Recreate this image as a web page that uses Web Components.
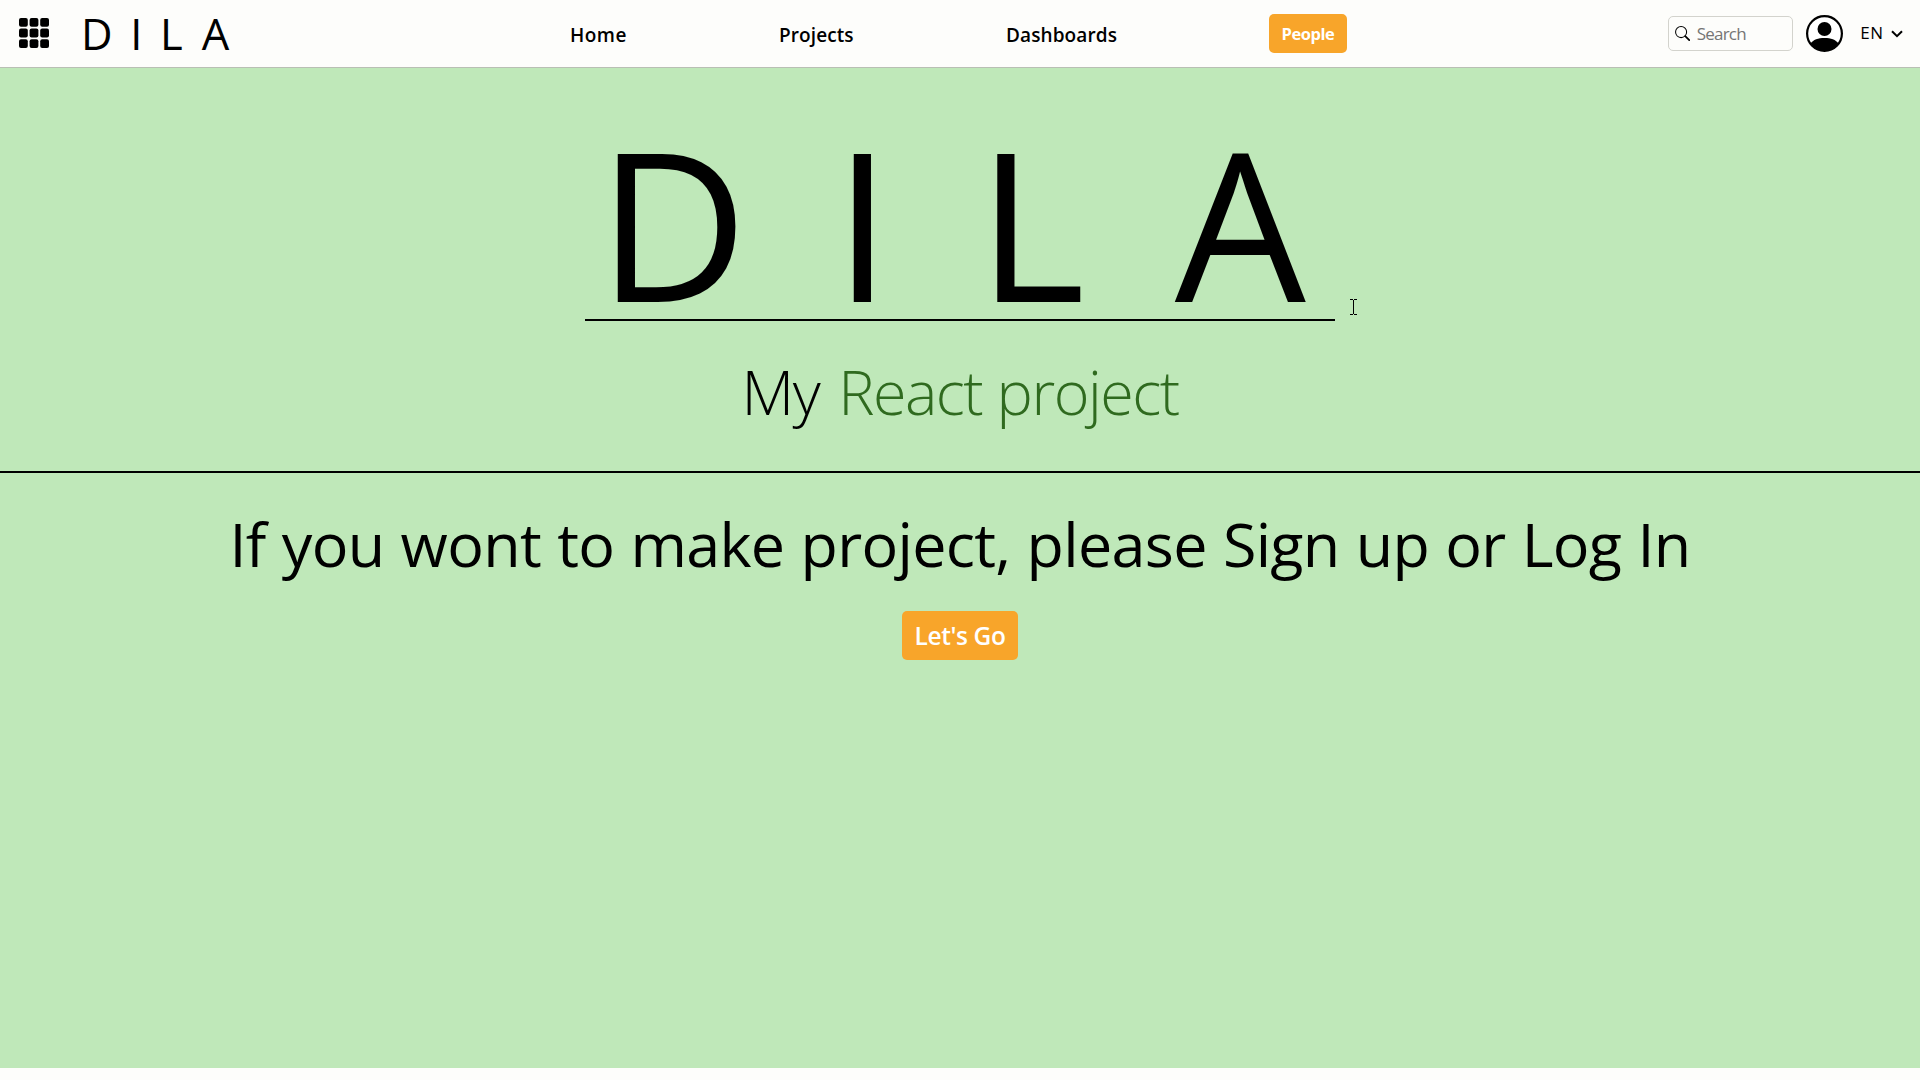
<!DOCTYPE html>
<html lang="en">
<head>
<meta charset="utf-8">
<title>DILA</title>
<style>
html,body{margin:0;height:100%;background:#fdfdfb;overflow:hidden}
body{font-family:"Open Sans","Noto Sans",sans-serif;color:#000}
</style>
</head>
<body>
<dila-app></dila-app>
<script>
const define=(name,html)=>customElements.define(name,class extends HTMLElement{
  constructor(){super();this.attachShadow({mode:'open'}).innerHTML=html;}
});

define('dila-logo',`<style>
:host{display:flex;font-size:43.5px;line-height:60px;white-space:pre}
span{letter-spacing:17.6px}.l{letter-spacing:19px}.a{letter-spacing:0}
</style><span>DI</span><span class="l">L</span><span class="a">A</span>`);

define('dila-apps',`<style>:host{display:block;width:30px;height:30px}svg{display:block}</style>
<svg width="30" height="30" viewBox="0 0 30 30">
${[0,10.6,21.2].map(y=>[0,10.6,21.2].map(x=>`<rect x="${x}" y="${y}" width="8.8" height="8.8" rx="2"/>`).join('')).join('')}
</svg>`);

define('dila-link',`<style>
:host{display:block;font-size:19px;font-weight:600;line-height:26px;padding-top:3px;letter-spacing:.1px;white-space:nowrap}
</style><slot></slot>`);

define('dila-button',`<style>
:host{display:flex;align-items:center;justify-content:center;box-sizing:border-box;background:#f8a52a;color:#fff;border-radius:5px;white-space:nowrap}
</style><slot></slot>`);

define('dila-search',`<style>
:host{display:flex;align-items:center;box-sizing:border-box;width:125px;height:35px;border:1px solid #d3d3cd;border-radius:5px;padding-left:6px;font-size:17px;letter-spacing:-.8px;color:#757575}
svg{margin-right:7px}
</style><svg width="15" height="15" viewBox="0 0 16 16"><circle cx="6.5" cy="6.5" r="5.9" fill="none" stroke="#000" stroke-width="1.1"/><path d="M10.9 10.9L15.2 15" stroke="#000" stroke-width="1.9" stroke-linecap="round"/></svg><slot></slot>`);

define('dila-avatar',`<style>:host{display:block;width:37px;height:37px}svg{display:block}</style>
<svg width="37" height="37" viewBox="0 0 37 37">
<clipPath id="c"><circle cx="18.5" cy="18.5" r="17.6"/></clipPath>
<circle cx="18.5" cy="18.5" r="17.4" fill="#fff" stroke="#000" stroke-width="2.2"/>
<circle cx="18.5" cy="14" r="7"/>
<path clip-path="url(#c)" d="M4 29C7.5 24.5 12 23 18.5 23S29.5 24.5 33 29V37H4Z"/>
</svg>`);

define('dila-lang',`<style>
:host{display:flex;align-items:center;font-size:17px;line-height:24px;letter-spacing:.5px;padding-bottom:1px}
svg{margin:2px 0 0 7.5px}
</style><slot></slot><svg width="12" height="8" viewBox="0 0 12 8"><path d="M1 1.2L6 6.2L11 1.2" fill="none" stroke="#000" stroke-width="2"/></svg>`);

define('dila-header',`<style>
:host{display:flex;align-items:center;box-sizing:border-box;height:68px;border-bottom:1px solid #b9bfb4;background:#fdfdfb;padding:0 17px 0 19px}
.brand{display:flex;align-items:center;width:551px}
.brand dila-apps{margin-bottom:2px}
dila-logo{margin-left:32px}
nav{display:flex;align-items:center}
.people{width:78px;height:39px;font-size:16.5px;font-weight:700;letter-spacing:-.46px}
.h{width:209px;letter-spacing:.5px}.p{width:227px}.d{width:263px}
.tools{display:flex;align-items:center;margin-left:auto}
dila-avatar{margin:0 17.5px 0 13px}
</style>
<div class="brand"><dila-apps></dila-apps><dila-logo></dila-logo></div>
<nav><dila-link class="h">Home</dila-link><dila-link class="p">Projects</dila-link><dila-link class="d">Dashboards</dila-link><dila-button class="people">People</dila-button></nav>
<div class="tools"><dila-search>Search</dila-search><dila-avatar></dila-avatar><dila-lang>EN</dila-lang></div>`);

define('dila-hero',`<style>
:host{display:flex;flex-direction:column;align-items:center;height:405px;box-sizing:border-box;border-bottom:2px solid #000;padding-top:55px}
h1{display:flex;box-sizing:border-box;width:750px;height:198px;margin:0;border-bottom:2px solid #000;padding-left:12.5px;font-size:207.5px;line-height:197px;font-weight:400;white-space:nowrap}
h1 span{letter-spacing:85.5px}h1 .l{letter-spacing:89.5px}h1 .a{letter-spacing:0}
p{margin:31px 0 0;font-size:61px;line-height:80px;font-weight:300;letter-spacing:-1.2px;white-space:nowrap}
em{font-style:normal;color:#2f6a1f;letter-spacing:-1.5px;margin-left:4px}
</style><h1><span>DI</span><span class="l">L</span><span class="a">A</span></h1><p>My <em>React project</em></p>`);

define('dila-invite',`<style>
:host{display:flex;flex-direction:column;align-items:center;padding-top:31px}
p{margin:0;font-size:61px;line-height:80px;letter-spacing:-.68px;word-spacing:1px;white-space:nowrap}
dila-button{width:116px;height:49px;margin-top:27px;font-size:24.5px;font-weight:600;letter-spacing:-.4px}
</style><p><slot></slot></p><dila-button>Let's Go</dila-button>`);

define('dila-caret',`<style>:host{position:absolute;left:1349px;top:298px;width:9px;height:18px}svg{display:block}</style>
<svg width="9" height="18" viewBox="0 0 9 18" shape-rendering="crispEdges"><path d="M1 1.5H4M5 1.5H8M4.5 2V16M1 16.5H4M5 16.5H8" stroke="#000" fill="none"/></svg>`);

define('dila-app',`<style>
:host{display:flex;flex-direction:column;height:1068px;background:#bfe8b9}
</style><dila-header></dila-header><dila-hero></dila-hero><dila-invite>If you wont to make project, please Sign up or Log In</dila-invite><dila-caret></dila-caret>`);
</script>
</body>
</html>
